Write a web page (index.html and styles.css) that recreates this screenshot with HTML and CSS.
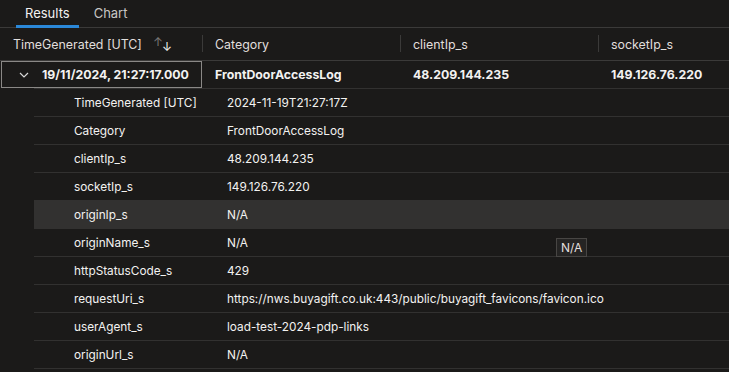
FILE: index.html
```html
<!DOCTYPE html>
<html lang="en">
<head>
    <meta charset="UTF-8">
    <title>Results</title>
    <link rel="stylesheet" href="styles.css">
</head>
<body>

    <nav class="tabs">
        <span class="tab active">Results</span>
        <span class="tab">Chart</span>
    </nav>

    <div class="grid">
        <div class="head-row">
            <div class="cell col-1">TimeGenerated [UTC]
                <span class="sort"><span class="up">&#8593;</span><span class="down">&#8595;</span></span>
            </div>
            <div class="cell col-2">Category</div>
            <div class="cell col-3">clientIp_s</div>
            <div class="cell col-4">socketIp_s</div>
        </div>

        <div class="data-row">
            <div class="cell col-1 focused">
                <svg class="chevron" width="10" height="6" viewBox="0 0 10 6"><path d="M1 1 L5 5 L9 1" fill="none" stroke="#d8d8d8" stroke-width="1.2"/></svg>
                19/11/2024, 21:27:17.000
            </div>
            <div class="cell col-2">FrontDoorAccessLog</div>
            <div class="cell col-3">48.209.144.235</div>
            <div class="cell col-4">149.126.76.220</div>
        </div>

        <div class="details">
            <div class="detail"><span class="key">TimeGenerated [UTC]</span><span class="val">2024-11-19T21:27:17Z</span></div>
            <div class="detail"><span class="key">Category</span><span class="val">FrontDoorAccessLog</span></div>
            <div class="detail"><span class="key">clientIp_s</span><span class="val">48.209.144.235</span></div>
            <div class="detail"><span class="key">socketIp_s</span><span class="val">149.126.76.220</span></div>
            <div class="detail hover"><span class="key">originIp_s</span><span class="val">N/A</span></div>
            <div class="detail"><span class="key">originName_s</span><span class="val">N/A</span></div>
            <div class="detail"><span class="key">httpStatusCode_s</span><span class="val">429</span></div>
            <div class="detail"><span class="key">requestUri_s</span><span class="val">https://nws.buyagift.co.uk:443/public/buyagift_favicons/favicon.ico</span></div>
            <div class="detail"><span class="key">userAgent_s</span><span class="val">load-test-2024-pdp-links</span></div>
            <div class="detail"><span class="key">originUrl_s</span><span class="val">N/A</span></div>
        </div>
    </div>

    <div class="tooltip">N/A</div>

</body>
</html>
```

FILE: styles.css
```css
/* --- base --- */
body {
    margin: 0;
    background-color: #1b1a19;
    color: #f3f2f1;
    font-family: Inter, "Open Sans", sans-serif;
    font-size: 12.4px;
    overflow: hidden;
}

/* --- tabs --- */
.tabs {
    display: flex;
    height: 27px;
    padding-left: 16px;
    border-bottom: 1px solid #3b3a39;
}

.tab {
    padding: 4px 9px 0;
    color: #c8c6c4;
    font-size: 13px;
    line-height: 18px;
    position: relative;
}

.tab.active {
    color: #f3f2f1;
}

.tab.active::after {
    content: "";
    position: absolute;
    left: 0;
    right: 0;
    bottom: -1px;
    height: 3px;
    background-color: #2b88d8;
}

.tab + .tab {
    margin-left: 6px;
}

/* --- grid --- */
.head-row,
.data-row {
    display: flex;
}

.head-row {
    height: 32px;
    border-bottom: 1px solid #3b3a39;
    color: #e1dfdd;
}

.cell {
    display: flex;
    align-items: center;
    padding-left: 13px;
    box-sizing: border-box;
    white-space: nowrap;
}

.col-1 { width: 202px; }
.col-2 { width: 198px; }
.col-3 { width: 198px; }
.col-4 { flex: 1; }

.head-row .cell + .cell {
    position: relative;
}

.head-row .cell + .cell::before {
    content: "";
    position: absolute;
    left: 0;
    top: 7px;
    height: 17px;
    border-left: 1px solid #3b3a39;
}

.sort {
    margin-left: 11px;
    font-size: 12px;
    display: flex;
}

.sort .up {
    color: #797775;
    position: relative;
    top: -3px;
}

.sort .down {
    color: #f3f2f1;
    position: relative;
    top: 2px;
    margin-left: -1px;
}

.data-row {
    height: 27px;
    font-weight: 700;
    font-size: 12.3px;
}

.focused {
    margin-left: 1px;
    width: 201px;
    border: 1px solid #8a8886;
    padding-left: 17px;
}

.chevron {
    margin-right: 13px;
}

/* --- expanded detail --- */
.details {
    margin-left: 34px;
    font-size: 11.8px;
}

.detail {
    display: flex;
    align-items: center;
    height: 27px;
    border-top: 1px solid #323130;
    padding-left: 40px;
}

.detail:last-child {
    border-bottom: 1px solid #323130;
}

.detail.hover {
    background-color: #323130;
}

.key {
    width: 153px;
    flex-shrink: 0;
}

/* --- tooltip --- */
.tooltip {
    position: absolute;
    left: 556px;
    top: 238px;
    padding: 1px 4px;
    font-size: 12px;
    background-color: #252423;
    border: 1px solid #484644;
    color: #e1dfdd;
}
```
